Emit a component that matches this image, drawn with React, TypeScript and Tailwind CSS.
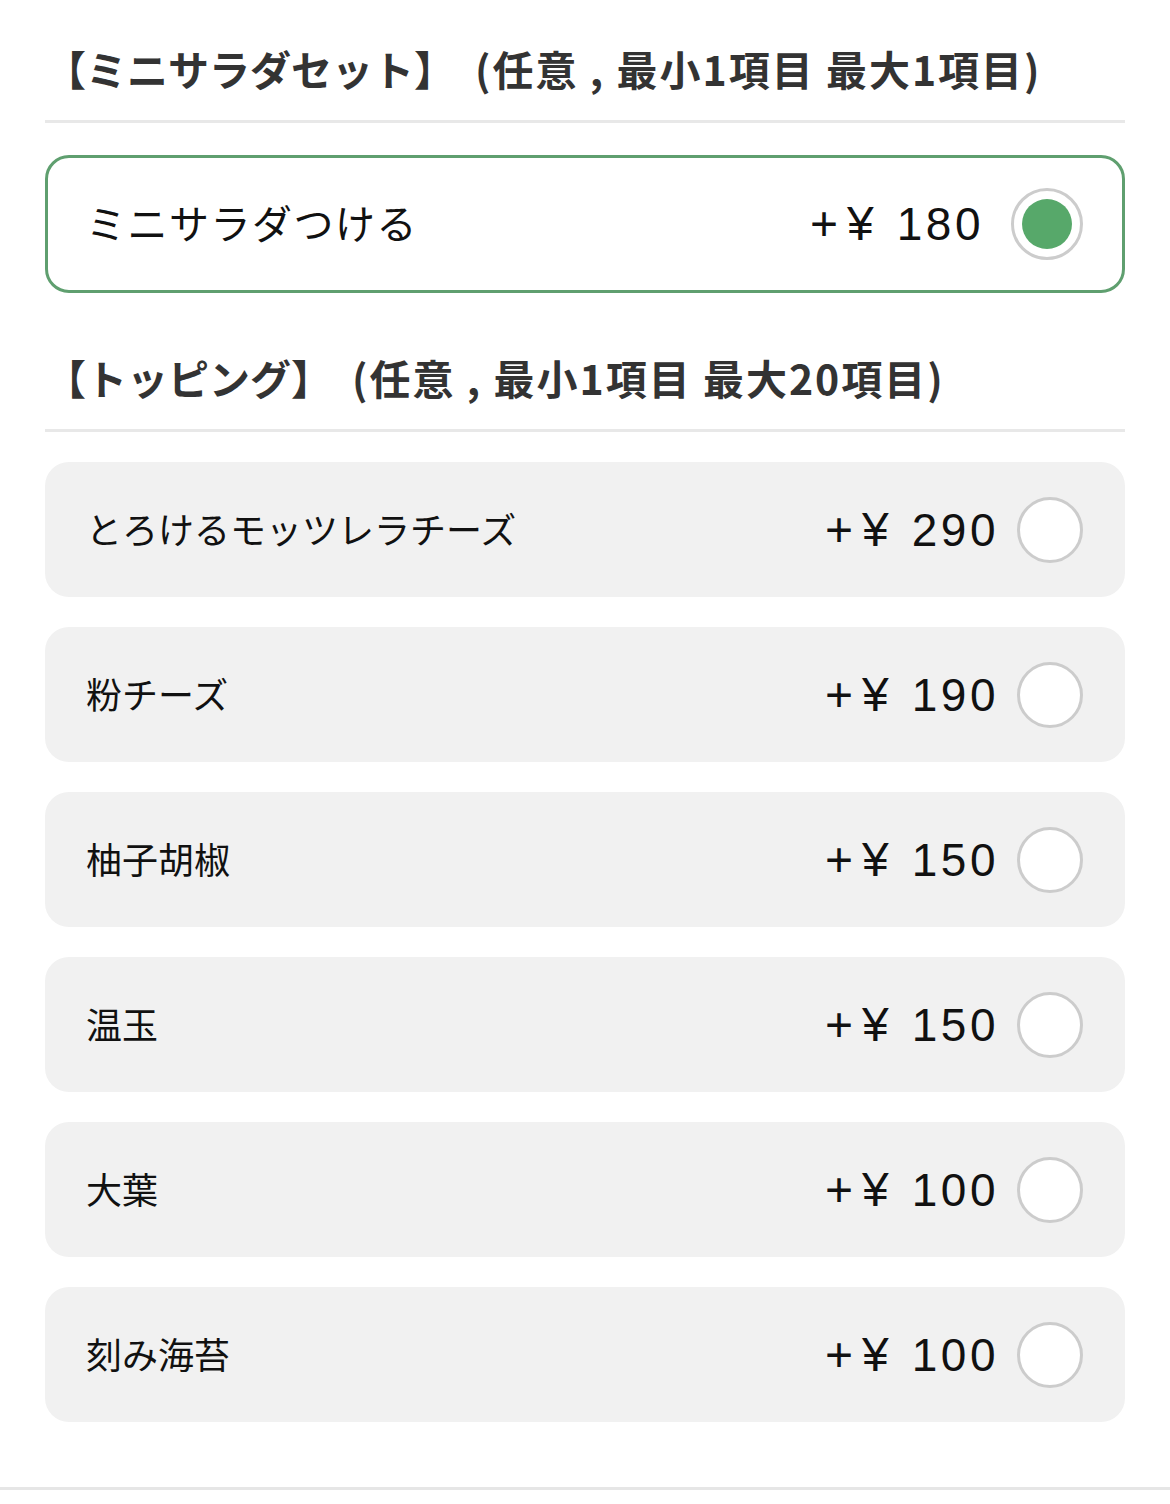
import React from "react";

const toppings = [
  { name: "とろけるモッツレラチーズ", price: "290" },
  { name: "粉チーズ", price: "190" },
  { name: "柚子胡椒", price: "150" },
  { name: "温玉", price: "150" },
  { name: "大葉", price: "100" },
  { name: "刻み海苔", price: "100" },
];

const jp = { fontFamily: '"Noto Sans CJK JP", "Noto Sans", sans-serif' };
const num = { fontFamily: '"Liberation Sans", "Noto Sans CJK JP", sans-serif' };

function Header({ title, rule }: { title: string; rule: string }) {
  return (
    <div className="h-[100px] flex items-center border-b-[3px] border-[#e8e8e8] box-content">
      <div className="text-[41px] font-bold text-[#333333] leading-none whitespace-nowrap pb-[4px]" style={jp}>
        {title}
        <span className="ml-[20px] tracking-[2px]">{rule}</span>
      </div>
    </div>
  );
}

function Price({ value }: { value: string }) {
  return (
    <span className="text-[46px] text-[#111] leading-none flex items-center" style={num}>
      <span className="text-[48px] tracking-[9px]">+¥</span>
      <span className="ml-[14px] tracking-[3.5px]">{value}</span>
    </span>
  );
}

export default function App() {
  return (
    <div className="w-[1170px] min-h-[1504px] bg-white">
      <div className="px-[45px] pt-[20px]">
        <Header title="【ミニサラダセット】" rule="(任意 , 最小1項目 最大1項目)" />
        <div className="mt-[32px] h-[138px] rounded-[24px] border-[3px] border-[#5f9f6f] bg-white flex items-center justify-between pl-[38px] pr-[39px]">
          <span className="text-[40px] text-[#111] leading-none tracking-[1.5px] mb-[4px]" style={jp}>
            ミニサラダつける
          </span>
          <div className="flex items-center gap-[27px]">
            <Price value="180" />
            <div className="w-[72px] h-[72px] rounded-full border-[3px] border-[#cccccc] bg-white flex items-center justify-center">
              <div className="w-[50px] h-[50px] rounded-full bg-[#57a86a]" />
            </div>
          </div>
        </div>

        <div className="mt-[36px]">
          <Header title="【トッピング】" rule="(任意 , 最小1項目 最大20項目)" />
        </div>

        <div className="mt-[30px] flex flex-col gap-[30px]">
          {toppings.map((t) => (
            <div
              key={t.name}
              className="h-[135px] rounded-[24px] bg-[#f1f1f1] flex items-center justify-between pl-[41px] pr-[42px]"
            >
              <span className="text-[36px] text-[#111] leading-none mb-[4px]" style={jp}>
                {t.name}
              </span>
              <div className="flex items-center gap-[18px]">
                <Price value={t.price} />
                <div className="w-[66px] h-[66px] rounded-full border-[3px] border-[#cccccc] bg-white" />
              </div>
            </div>
          ))}
        </div>
      </div>
      <div className="mt-[65px] h-[3px] bg-[#e6e6e6]" />
    </div>
  );
}
